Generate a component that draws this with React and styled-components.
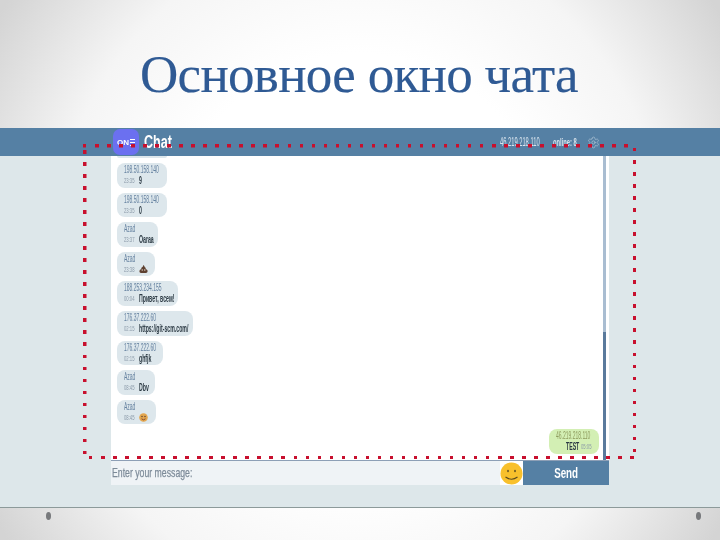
import React from 'react';
import styled, { createGlobalStyle, css } from 'styled-components';
import { Settings } from 'lucide-react';

const messages = [
    { id: 1, from: '198.50.158.140', time: '23:35', text: '9', width: 50 },
    { id: 2, from: '198.50.158.140', time: '23:35', text: '0', width: 50 },
    { id: 3, from: 'Azad', time: '23:37', text: 'Oaraa', width: 41 },
    { id: 4, from: 'Azad', time: '23:38', icon: 'poop', width: 38 },
    { id: 5, from: '188.253.234.155', time: '00:04', text: 'Привет, всем!', width: 61 },
    { id: 6, from: '176.37.222.60', time: '02:15', text: 'https://git-scm.com/', width: 76 },
    { id: 7, from: '176.37.222.60', time: '02:15', text: 'ghfjk', width: 46 },
    { id: 8, from: 'Azad', time: '08:45', text: 'Dbv', width: 38 },
    { id: 9, from: 'Azad', time: '08:45', icon: 'face', width: 39 },
];

// no condensed family is installed, so Arial widths get squeezed
const condensed = css`
    display: inline-block;
    white-space: nowrap;
    transform-origin: left center;
    font-family: "Liberation Sans", sans-serif;
`;

const GlobalStyle = createGlobalStyle`
    html, body {
        margin: 0;
        padding: 0;
    }
    body {
        width: 720px;
        height: 540px;
        overflow: hidden;
    }
`;

const Slide = styled.div`
    position: relative;
    width: 720px;
    height: 540px;
    background: radial-gradient(ellipse 430px 470px at 50% 50%, #ffffff 46%, #f5f5f5 72%, #d4d4d4 100%);
    filter: blur(0.35px);
`;

const TitleArea = styled.div`
    height: 128px;
    box-sizing: border-box;
    padding: 46px 0 0 140px;
`;

const Title = styled.h1`
    margin: 0;
    font-family: "Liberation Serif", serif;
    font-weight: 400;
    font-size: 53px;
    letter-spacing: -0.7px;
    line-height: 56px;
    color: #2f5a94;
    -webkit-text-stroke: 0.15px #2f5a94;
`;

const Band = styled.div`
    height: 379px;
    background: #dde7ea;
    display: flex;
    flex-direction: column;
`;

const Header = styled.div`
    height: 28px;
    flex: none;
    background: #5580a4;
    display: flex;
    align-items: center;
    padding-left: 113px;
    padding-right: 120px;
    color: #fff;
`;

const Logo = styled.div`
    width: 26px;
    height: 26px;
    flex: none;
    border-radius: 7px;
    background: #6b70f0;
    display: flex;
    align-items: center;
    justify-content: center;
    gap: 1px;
    font-family: "Liberation Sans", sans-serif;
    font-weight: 700;
    font-size: 8px;
`;

const LogoBars = styled.span`
    width: 5px;
    height: 7px;
    background: repeating-linear-gradient(#fff 0 1px, transparent 1px 3px);
`;

const Brand = styled.div`
    flex: 1;
    margin-left: 5px;
`;

const BrandText = styled.span`
    ${condensed}
    font-weight: 700;
    font-size: 18px;
    transform: scaleX(0.7);
`;

const Ip = styled.span`
    ${condensed}
    width: 53px;
    font-size: 12px;
    color: #d8e3ee;
    transform: scaleX(0.48);
`;

const Online = styled.span`
    ${condensed}
    width: 34px;
    font-size: 10px;
    font-weight: 700;
    color: #d5e0ea;
    transform: scaleX(0.58);
`;

const Panel = styled.div`
    width: 498px;
    margin-left: 111px;
    flex: none;
    display: flex;
    flex-direction: column;
`;

const Feed = styled.div`
    height: 304px;
    box-sizing: border-box;
    background: #fff;
    display: flex;
`;

const Messages = styled.div`
    flex: 1;
    padding: 7px 4px 6px 6px;
    display: flex;
    flex-direction: column;
    gap: 5px;
`;

// bottom edge of the message scrolled out of view
const Sliver = styled.div`
    width: 50px;
    height: 2px;
    margin-top: -7px;
    border-radius: 0 0 6px 6px;
    background: #dde7ec;
`;

const Bubble = styled.div`
    box-sizing: border-box;
    height: 24.6px;
    padding: 2px 0 0 7px;
    border-radius: 8px;
    background: ${props => (props.$own ? '#d3efb4' : '#dde7ec')};
    align-self: ${props => (props.$own ? 'flex-end' : 'flex-start')};
    margin-top: ${props => (props.$own ? 'auto' : '0')};
`;

const Sender = styled.div`
    ${condensed}
    display: block;
    font-size: 10px;
    line-height: 10px;
    color: ${props => (props.$own ? '#8e9c5e' : '#64809f')};
    transform: scaleX(0.5);
`;

const Line = styled.div`
    display: flex;
    align-items: center;
    height: 11px;
    padding-left: ${props => (props.$own ? '10px' : '0')};
`;

const Time = styled.span`
    ${condensed}
    width: 15px;
    flex: none;
    font-size: 7px;
    color: #8a99a8;
    transform: scaleX(0.6);
`;

const Text = styled.span`
    ${condensed}
    width: ${props => (props.$own ? '15px' : 'auto')};
    flex: none;
    font-size: 10px;
    font-weight: 700;
    color: #2c3a44;
    transform: scaleX(0.52);
`;

const Scrollbar = styled.div`
    width: 3px;
    margin-right: 3px;
    background: linear-gradient(#a9bdd1 0 176px, #5a7a9c 176px);
`;

const InputRow = styled.div`
    height: 25px;
    display: flex;
    border-top: 1px solid #8d9fb6;
    box-sizing: border-box;
`;

const Input = styled.div`
    flex: 1;
    background: #eff3f6;
    padding-left: 1px;
    line-height: 22px;
`;

const InputText = styled.span`
    ${condensed}
    font-size: 13px;
    color: #7d8b99;
    -webkit-text-stroke: 0.25px #7d8b99;
    transform: scaleX(0.67);
`;

const SmileBox = styled.div`
    width: 23px;
    background: #fff;
    display: flex;
    align-items: center;
    justify-content: center;
`;

const SendButton = styled.div`
    width: 86px;
    background: #5580a4;
    line-height: 24px;
    text-align: center;
`;

const SendText = styled.span`
    ${condensed}
    transform-origin: center;
    color: #fff;
    font-weight: 700;
    font-size: 14px;
    transform: scaleX(0.7);
`;

const Rule = styled.div`
    height: 1px;
    background: #8c9a9a;
`;

const Footer = styled.div`
    display: flex;
    justify-content: space-between;
    padding: 4px 19px 0 46px;
`;

const Pin = styled.div`
    width: 5px;
    height: 8px;
    border-radius: 50%;
    background: #77797c;
`;

// the dotted frame lies over the slide content
const DottedFrame = styled.div`
    position: absolute;
    left: 83px;
    top: 144px;
    width: 553px;
    height: 315px;
    background:
        repeating-linear-gradient(90deg, #c8102e 0 3.5px, transparent 3.5px 12.03px) 0 0 / 100% 3.5px no-repeat,
        repeating-linear-gradient(90deg, #c8102e 0 3.5px, transparent 3.5px 12.03px) 6px 100% / 100% 3.5px no-repeat,
        repeating-linear-gradient(#c8102e 0 3.5px, transparent 3.5px 12.03px) 0 6px / 3.5px 100% no-repeat,
        repeating-linear-gradient(#c8102e 0 3.5px, transparent 3.5px 12.03px) 100% 4px / 3.5px 100% no-repeat;
`;

const Poop = () => (
    <svg width="9" height="8" viewBox="0 0 9 8">
        <path d="M4 0 Q6 1 5.6 2 Q7 2.4 6.8 4 Q9 4.6 8.6 6.6 Q8.4 8 7 8 L2 8 Q0.4 8 0.4 6.6 Q0.2 4.6 2.2 4 Q2 2.6 3.4 2 Q4.4 1.4 4 0 Z" fill="#5e4030" />
        <circle cx="3.2" cy="5" r="0.7" fill="#e8e0d8" />
        <circle cx="5.8" cy="5" r="0.7" fill="#e8e0d8" />
    </svg>
);

const Face = () => (
    <svg width="9" height="9" viewBox="0 0 9 9">
        <circle cx="4.5" cy="4.5" r="4.3" fill="#e3a64f" />
        <circle cx="3" cy="3.5" r="0.8" fill="#6b4a33" />
        <circle cx="6" cy="3.5" r="0.8" fill="#6b4a33" />
        <path d="M2.5 5.8 Q4.5 7.8 6.5 5.8" stroke="#8a4a2c" fill="none" />
    </svg>
);

const Smile = () => (
    <svg width="23" height="23" viewBox="0 0 23 23">
        <circle cx="11.5" cy="11.5" r="11" fill="#f8c02c" />
        <ellipse cx="8" cy="9" rx="0.8" ry="1.2" fill="#5a4a20" />
        <ellipse cx="15" cy="9" rx="0.8" ry="1.2" fill="#5a4a20" />
        <path d="M5.5 15 Q11.5 19.5 17.5 15" stroke="#5a4a20" strokeWidth="1.1" fill="none" />
    </svg>
);

const App = () => {
    return (
        <Slide>
            <GlobalStyle />
            <TitleArea>
                <Title>Основное окно чата</Title>
            </TitleArea>
            <Band>
                <Header>
                    <Logo>
                        ON
                        <LogoBars />
                    </Logo>
                    <Brand>
                        <BrandText>Chat</BrandText>
                    </Brand>
                    <Ip>46.219.218.110</Ip>
                    <Online>online: 8</Online>
                    <Settings size={13} strokeWidth={1} color="#c6d4e2" />
                </Header>
                <Panel>
                    <Feed>
                        <Messages>
                            <Sliver />
                            {messages.map(m => (
                                <Bubble key={m.id} style={{ width: m.width }}>
                                    <Sender>{m.from}</Sender>
                                    <Line>
                                        <Time>{m.time}</Time>
                                        {m.text && <Text>{m.text}</Text>}
                                        {m.icon === 'poop' && <Poop />}
                                        {m.icon === 'face' && <Face />}
                                    </Line>
                                </Bubble>
                            ))}
                            <Bubble $own style={{ width: 50 }}>
                                <Sender $own>46.219.218.110</Sender>
                                <Line $own>
                                    <Text $own>TEST</Text>
                                    <Time>05:05</Time>
                                </Line>
                            </Bubble>
                        </Messages>
                        <Scrollbar />
                    </Feed>
                    <InputRow>
                        <Input>
                            <InputText>Enter your message:</InputText>
                        </Input>
                        <SmileBox>
                            <Smile />
                        </SmileBox>
                        <SendButton>
                            <SendText>Send</SendText>
                        </SendButton>
                    </InputRow>
                </Panel>
            </Band>
            <Rule />
            <Footer>
                <Pin />
                <Pin />
            </Footer>
            <DottedFrame />
        </Slide>
    );
};

export default App;
